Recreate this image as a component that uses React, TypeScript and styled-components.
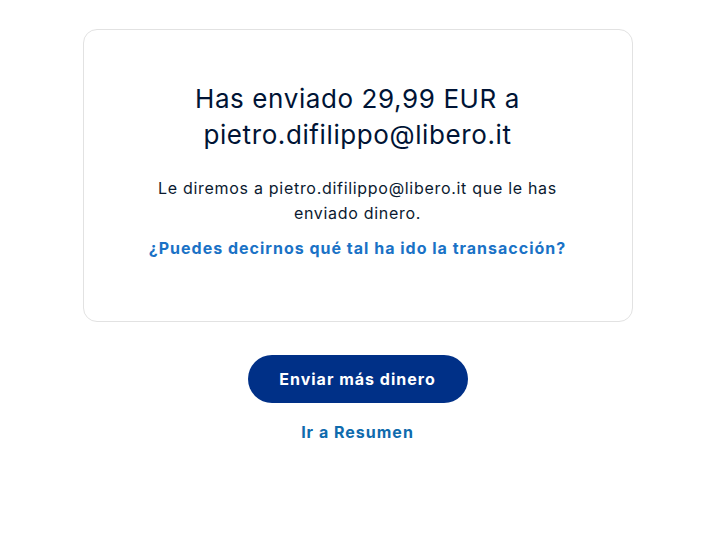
import styled, { createGlobalStyle } from 'styled-components';

const GlobalStyle = createGlobalStyle`
  html, body {
    margin: 0;
    padding: 0;
    background: #ffffff;
  }
  body {
    font-family: Inter, "Noto Sans", "Liberation Sans", sans-serif;
    color: #0b1a30;
  }
`;

const Page = styled.main`
  display: flex;
  flex-direction: column;
  align-items: center;
  padding-top: 29px;
`;

const Card = styled.section`
  box-sizing: border-box;
  width: 550px;
  min-height: 293px;
  padding: 51px 50px 40px;
  border: 1px solid #e2e2e2;
  border-radius: 14px;
  display: flex;
  flex-direction: column;
  align-items: center;
  text-align: center;
`;

const Title = styled.h1`
  margin: 0;
  font-size: 26px;
  line-height: 36px;
  font-weight: 400;
  letter-spacing: 0.6px;
  color: #001435;
`;

const Body = styled.p`
  margin: 23px 0 0;
  max-width: 430px;
  font-size: 16px;
  line-height: 25px;
  letter-spacing: 0.7px;
  color: #0b1a30;
`;

const FeedbackLink = styled.a`
  margin-top: 10px;
  font-size: 16px;
  line-height: 24px;
  font-weight: 700;
  letter-spacing: 1px;
  color: #1a72c6;
  text-decoration: none;
  cursor: pointer;
`;

const Actions = styled.div`
  display: flex;
  flex-direction: column;
  align-items: center;
  gap: 17px;
  margin-top: 33px;
`;

const PrimaryButton = styled.button`
  width: 220px;
  height: 48px;
  border: none;
  border-radius: 24px;
  background: #003087;
  color: #ffffff;
  font-family: inherit;
  font-size: 16px;
  font-weight: 700;
  letter-spacing: 1px;
  cursor: pointer;
`;

const TextLink = styled.a`
  font-size: 16px;
  line-height: 24px;
  font-weight: 700;
  letter-spacing: 1px;
  color: #0f6bad;
  text-decoration: none;
  cursor: pointer;
`;

const App = () => {
  const email = 'pietro.difilippo@libero.it';

  return (
    <>
      <GlobalStyle />
      <Page>
        <Card>
          <Title>
            Has enviado 29,99 EUR a
            <br />
            {email}
          </Title>
          <Body>
            Le diremos a {email} que le has enviado dinero.
          </Body>
          <FeedbackLink>¿Puedes decirnos qué tal ha ido la transacción?</FeedbackLink>
        </Card>
        <Actions>
          <PrimaryButton>Enviar más dinero</PrimaryButton>
          <TextLink>Ir a Resumen</TextLink>
        </Actions>
      </Page>
    </>
  );
};

export default App;
